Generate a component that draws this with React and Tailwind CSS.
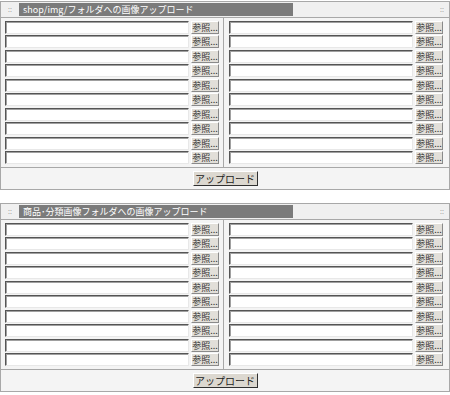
const font = { fontFamily: '"MS PGothic", "Noto Sans CJK JP", sans-serif' }

function FileRow() {
  return (
    <div className="flex items-center h-[14.5px]">
      <div className="w-[184px] h-[13px] bg-white border border-t-[#555] border-l-[#555] border-b-[#e8e8e8] border-r-[#e8e8e8] shadow-[inset_1px_1px_0_#a0a0a0]" />
      <div className="ml-[2px] w-[28px] h-[13px] bg-[#e2dfd9] border border-t-white border-l-white border-b-[#8a8a8a] border-r-[#8a8a8a] flex items-center justify-center text-[9px] leading-none text-[#333]">
        参照...
      </div>
    </div>
  )
}

function Column() {
  return (
    <div className="flex flex-col px-[4px] pt-[2px] pb-[2px]">
      {Array.from({ length: 10 }).map((_, i) => (
        <FileRow key={i} />
      ))}
    </div>
  )
}

function Panel({ title }) {
  return (
    <div className="border border-[#a8a8a8] bg-[#f4f4f4]">
      <div className="flex items-center h-[16px] border-b border-[#a8a8a8] bg-[#f0f0f0]">
        <div className="w-[18px] text-[7px] text-[#999] text-center leading-none">::</div>
        <div className="w-[274px] h-[13px] bg-[#7b7b7b] text-white text-[9px] leading-[13px] pl-[4px]">
          {title}
        </div>
        <div className="flex-1 text-right pr-[5px] text-[7px] text-[#999] leading-none">::</div>
      </div>
      <div className="flex">
        <div className="border-r border-[#a8a8a8]">
          <Column />
        </div>
        <div className="pl-[1px]">
          <Column />
        </div>
      </div>
      <div className="flex justify-center items-center h-[22px] border-t border-[#a8a8a8]">
        <div className="w-[65px] h-[15px] bg-[#dcd8d0] border border-t-white border-l-white border-b-[#303030] border-r-[#303030] flex items-center justify-center text-[10px] leading-none text-[#222]">
          アップロード
        </div>
      </div>
    </div>
  )
}

export default function App() {
  return (
    <div className="w-[450px] h-[395px] bg-white pt-[1px] text-[#222]" style={font}>
      <Panel title="shop/img/フォルダへの画像アップロード" />
      <div className="h-[13px]" />
      <Panel title="商品･分類画像フォルダへの画像アップロード" />
    </div>
  )
}
